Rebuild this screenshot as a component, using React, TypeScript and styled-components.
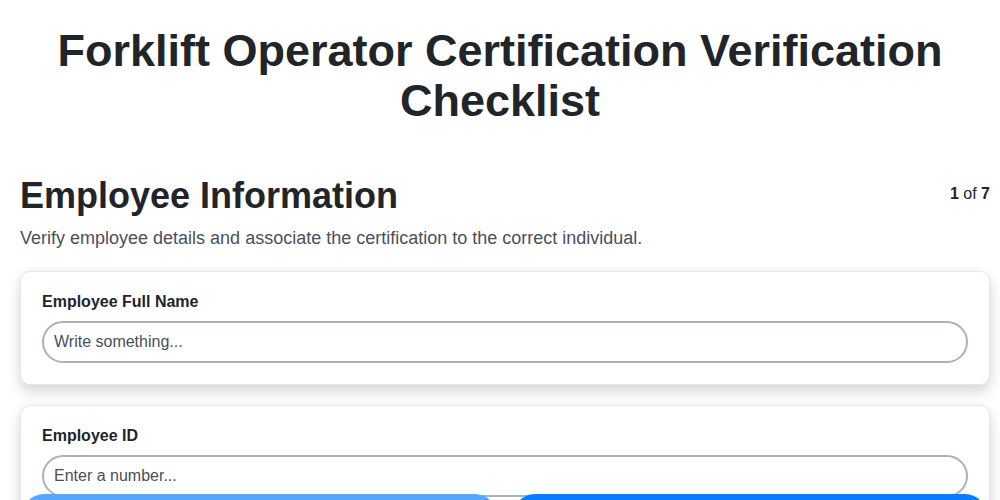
import { FunctionComponent } from "react";
import styled, { createGlobalStyle } from "styled-components";

const GlobalStyle = createGlobalStyle`
  * {
    box-sizing: border-box;
  }
  body {
    margin: 0;
    background: #ffffff;
    font-family: "Liberation Sans", Arial, sans-serif;
    color: #212529;
  }
`;

interface IFieldProps {
  label: string;
  placeholder: string;
  type?: string;
}

const Field: FunctionComponent<IFieldProps> = ({ label, placeholder, type }) => {
  return (
    <Card>
      <Label>{label}</Label>
      <Input type={type || "text"} placeholder={placeholder} />
    </Card>
  );
};

const App: FunctionComponent = () => {
  return (
    <>
      <GlobalStyle />
      <Header>
        <Title>Forklift Operator Certification Verification Checklist</Title>
      </Header>
      <Page>
        <SectionHeader>
          <SectionTitle>Employee Information</SectionTitle>
          <Progress>
            <b>1</b> of <b>7</b>
          </Progress>
        </SectionHeader>
        <Description>
          Verify employee details and associate the certification to the correct individual.
        </Description>
        <Fields>
          <Field label="Employee Full Name" placeholder="Write something..." />
          <Field label="Employee ID" placeholder="Enter a number..." type="number" />
        </Fields>
      </Page>
      <NavBar>
        <NavButton $variant="secondary" aria-label="Previous" />
        <NavButton $variant="primary" aria-label="Next" />
      </NavBar>
    </>
  );
};

export default App;

const Header = styled.header`
  padding: 26px 20px 48px;
`;

const Title = styled.h1`
  margin: 0;
  font-size: 45px;
  font-weight: 700;
  line-height: 50px;
  text-align: center;
  color: #212529;
`;

const Page = styled.main`
  padding: 0 10px 80px 20px;
`;

const SectionHeader = styled.div`
  display: flex;
  justify-content: space-between;
  align-items: flex-start;
`;

const SectionTitle = styled.h2`
  margin: 0;
  font-size: 36px;
  font-weight: 700;
  line-height: 44px;
  color: #212529;
`;

const Progress = styled.div`
  padding-top: 11px;
  font-size: 16px;
  color: #212529;
  b {
    font-weight: 700;
  }
`;

const Description = styled.p`
  margin: 9px 0 22px;
  font-size: 18px;
  line-height: 22px;
  color: #4a4f59;
`;

const Fields = styled.div`
  display: flex;
  flex-direction: column;
  gap: 20px;
`;

const Card = styled.div`
  background: #ffffff;
  border: 1px solid #e6e8ee;
  border-radius: 10px;
  padding: 20px 21px 21px;
  box-shadow: 0 8px 14px rgba(30, 35, 60, 0.16), 0 0 8px rgba(30, 35, 60, 0.05);
`;

const Label = styled.div`
  font-size: 16px;
  font-weight: 700;
  line-height: 19px;
  margin-bottom: 10px;
  color: #212529;
`;

const Input = styled.input`
  display: block;
  width: 100%;
  height: 42px;
  padding: 0 10px;
  border: 2px solid #aab1b9;
  border-radius: 21px;
  font-family: "Liberation Sans", Arial, sans-serif;
  font-size: 16px;
  color: #212529;
  background: #ffffff;
  outline: none;
  appearance: textfield;
  &::placeholder {
    color: #4a4f59;
  }
  &::-webkit-outer-spin-button,
  &::-webkit-inner-spin-button {
    -webkit-appearance: none;
    margin: 0;
  }
`;

const NavBar = styled.div`
  position: fixed;
  left: 22px;
  right: 13px;
  bottom: -38px;
  display: grid;
  grid-template-columns: 1fr 1fr;
  gap: 16px;
`;

const NavButton = styled.button<{ $variant: "primary" | "secondary" }>`
  height: 44px;
  border: none;
  border-radius: 22px;
  background: ${({ $variant }) => ($variant === "primary" ? "#0a7cff" : "#56a5ff")};
`;
